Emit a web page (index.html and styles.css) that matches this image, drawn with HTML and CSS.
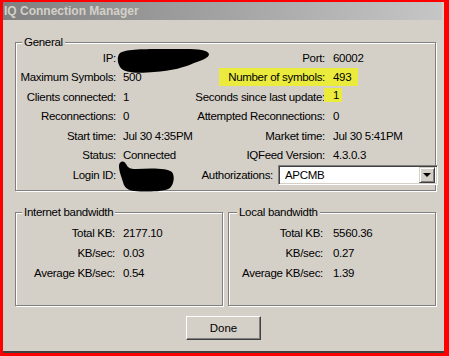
FILE: index.html
```html
<!DOCTYPE html>
<html lang="en">
<head>
    <meta charset="UTF-8">
    <title>IQ Connection Manager</title>
    <link rel="stylesheet" href="styles.css">
</head>
<body>

    <div class="window">
        <div class="titlebar">IQ Connection Manager</div>

        <div class="dialog">
            <div class="group general">
                <span class="legend">General</span>
                <div class="grid">
                    <span class="lbl">IP:</span>
                    <span class="val blot">
                        <svg class="scribble ip" width="96" height="28" viewBox="0 0 96 28">
                            <path d="M4,6 C10,1 40,2 70,2 C82,2 92,3 93,7 C93,11 86,13 78,16 C70,20 55,24 38,25 C25,26 8,27 4,20 C1,15 1,9 4,6 Z" fill="#000"/>
                        </svg>
                    </span>
                    <span class="lbl r">Port:</span>
                    <span class="val">60002</span>

                    <span class="lbl">Maximum Symbols:</span>
                    <span class="val">500</span>
                    <span class="lbl r hl-cell"><span class="hl hl-label">Number of symbols:</span></span>
                    <span class="val"><span class="hl hl-value">493</span></span>

                    <span class="lbl">Clients connected:</span>
                    <span class="val">1</span>
                    <span class="lbl r">Seconds since last update:</span>
                    <span class="val"><span class="hl hl-small">1</span></span>

                    <span class="lbl">Reconnections:</span>
                    <span class="val">0</span>
                    <span class="lbl r">Attempted Reconnections:</span>
                    <span class="val">0</span>

                    <span class="lbl">Start time:</span>
                    <span class="val">Jul 30 4:35PM</span>
                    <span class="lbl r">Market time:</span>
                    <span class="val">Jul 30 5:41PM</span>

                    <span class="lbl">Status:</span>
                    <span class="val">Connected</span>
                    <span class="lbl r">IQFeed Version:</span>
                    <span class="val">4.3.0.3</span>

                    <span class="lbl">Login ID:</span>
                    <span class="val blot">
                        <svg class="scribble login" width="60" height="36" viewBox="0 0 60 36">
                            <path d="M3,8 C3,3 8,2 10,6 C12,10 14,11 20,11 C35,10 52,10 56,14 C59,18 58,26 54,30 C48,34 30,34 18,33 C10,32 8,28 7,24 C6,20 3,14 3,8 Z" fill="#000"/>
                        </svg>
                    </span>
                    <div class="auth">
                        <span>Authorizations:</span>
                        <div class="combo">
                            <span class="combo-text">APCMB</span>
                            <span class="combo-btn"><span class="arrow"></span></span>
                        </div>
                    </div>
                </div>
            </div>

            <div class="bw-row">
                <div class="group bw inet">
                    <span class="legend">Internet bandwidth</span>
                    <div class="bw-grid">
                        <span class="lbl">Total KB:</span><span class="val">2177.10</span>
                        <span class="lbl">KB/sec:</span><span class="val">0.03</span>
                        <span class="lbl">Average KB/sec:</span><span class="val">0.54</span>
                    </div>
                </div>
                <div class="group bw local">
                    <span class="legend">Local bandwidth</span>
                    <div class="bw-grid">
                        <span class="lbl">Total KB:</span><span class="val">5560.36</span>
                        <span class="lbl">KB/sec:</span><span class="val">0.27</span>
                        <span class="lbl">Average KB/sec:</span><span class="val">1.39</span>
                    </div>
                </div>
            </div>

            <div class="actions">
                <button class="done">Done</button>
            </div>
        </div>
    </div>

</body>
</html>
```

FILE: styles.css
```css
body {
    margin: 0;
    width: 449px;
    height: 356px;
    overflow: hidden;
    background-color: #f00; /* red frame drawn around the window */
    font-family: "Liberation Sans", Arial, sans-serif;
    font-size: 11.5px;
    letter-spacing: -0.3px;
    color: #000;
}
.window {
    width: 441px;
    height: 349px;
    margin: 2px 0 0 3px;
    background-color: #d4d0c8;
    border-bottom: 2px solid #404040;
}
.titlebar {
    height: 18px;
    margin-right: 2px;
    padding-left: 1px;
    background: linear-gradient(to right, #808080, #c6c6c6);
    color: #d4d0c8;
    font: bold 12px "Liberation Sans", Arial, sans-serif;
    letter-spacing: 0;
    line-height: 18px;
}
.dialog {
    padding: 22px 8px 0 12px;
}

/* etched group boxes */
.group {
    position: relative;
    border: 1px solid #808080;
    box-shadow: 1px 1px 0 #fff, inset 1px 1px 0 #fff;
}
.legend {
    position: absolute;
    top: -8px;
    left: 6px;
    padding: 0 2px;
    line-height: 14px;
    background-color: #d4d0c8;
}
.general {
    padding: 5px 0 5px;
}
.grid {
    display: grid;
    grid-template-columns: 107px 69px 141px 1fr;
    grid-auto-rows: 19.5px;
    align-items: center;
}
.lbl {
    text-align: right;
    padding-right: 7px;
    white-space: nowrap;
}
.lbl.r {
    padding-right: 8px;
}
.val {
    white-space: nowrap;
}
.blot {
    position: relative;
    height: 100%;
}
.scribble {
    position: absolute;
    left: -7px;
}
.scribble.ip {
    top: -1px;
}
.scribble.login {
    top: -7px;
}

/* highlighter marks */
.hl {
    display: inline-block;
    background-color: #ebeb3e;
}
.lbl.hl-cell {
    padding-right: 0;
}
.hl-label {
    padding: 0 8px 0 9px;
    line-height: 18px;
}
.hl-value {
    padding-right: 7px;
    line-height: 18px;
}
.hl-small {
    margin-left: -9px;
    padding: 0 3px 0 9px;
    line-height: 14px;
    position: relative;
    top: -2px;
}

.auth {
    grid-column: 3 / 5;
    display: flex;
    align-items: center;
    justify-content: flex-end;
    gap: 5px;
    margin-right: -3px;
}
.combo {
    width: 160px;
    height: 20px;
    box-sizing: border-box;
    display: flex;
    align-items: center;
    padding: 2px;
    background-color: #fff;
    border: 1px solid;
    border-color: #808080 #fff #fff #808080;
    box-shadow: inset 1px 1px 0 #404040, inset -1px -1px 0 #d4d0c8;
}
.combo-text {
    flex: 1;
    padding-left: 4px;
}
.combo-btn {
    width: 16px;
    height: 16px;
    box-sizing: border-box;
    display: flex;
    align-items: center;
    justify-content: center;
    background-color: #d4d0c8;
    border: 1px solid;
    border-color: #d4d0c8 #404040 #404040 #d4d0c8;
    box-shadow: inset 1px 1px 0 #fff, inset -1px -1px 0 #808080;
}
.arrow {
    width: 0;
    height: 0;
    border-left: 4px solid transparent;
    border-right: 4px solid transparent;
    border-top: 4px solid #000;
}

/* bandwidth boxes */
.bw-row {
    display: flex;
    gap: 5px;
    margin-top: 21px;
}
.bw {
    width: 208px;
    height: 94px;
    box-sizing: border-box;
    padding-top: 10px;
}
.bw-grid {
    display: grid;
    grid-template-columns: 107px 1fr;
    grid-auto-rows: 20px;
    align-items: center;
}
.inet .lbl {
    padding-right: 8px;
}
.local .bw-grid {
    grid-template-columns: 104px 1fr;
}
.local .lbl {
    padding-right: 10px;
}
.local .legend {
    left: 8px;
}

.actions {
    display: flex;
    justify-content: center;
    padding-right: 4px;
    margin-top: 10px;
}
.done {
    width: 75px;
    height: 24px;
    padding: 0;
    font: inherit;
    color: #000;
    background-color: #d4d0c8;
    border: 1px solid;
    border-color: #fff #404040 #404040 #fff;
    box-shadow: inset -1px -1px 0 #808080;
}
```
